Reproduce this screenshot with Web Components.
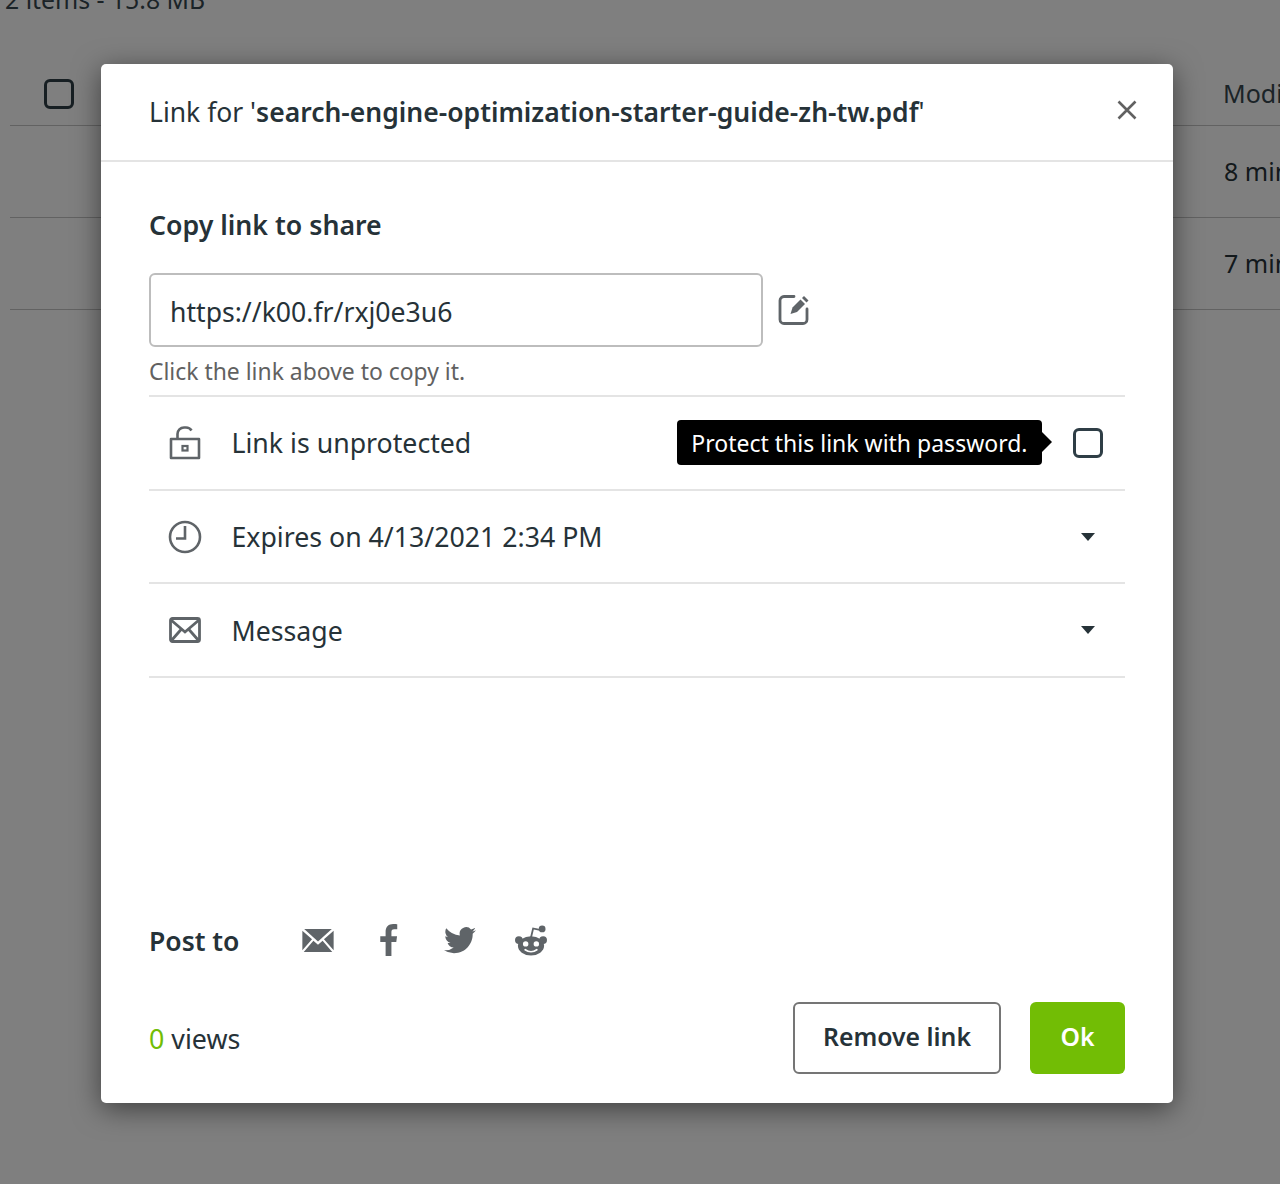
<!doctype html>
<html lang="en">
<head>
<meta charset="utf-8">
<title>Share link</title>
<style>
  html, body { margin: 0; height: 100%; }
  body { width: 1280px; height: 1184px; overflow: hidden; position: relative; font-family: "Noto Sans", "Open Sans", sans-serif; color: #263238; background: #fff; }
</style>
</head>
<body>
<file-list></file-list>
<share-dialog file="search-engine-optimization-starter-guide-zh-tw.pdf">
  <share-row label="Link is unprotected" icon="lock" mode="check"></share-row>
  <share-row label="Expires on 4/13/2021 2:34 PM" icon="clock"></share-row>
  <share-row label="Message" icon="mail"></share-row>
</share-dialog>

<script>
// 灰底後面的檔案列表
class FileList extends HTMLElement {
  constructor() {
    super();
    this.attachShadow({ mode: "open" });
    this.shadowRoot.innerHTML = `
      <style>
        :host { display: block; height: 1184px; overflow: hidden; font-size: 25px; color: #263238; padding-left: 10px; }
        .summary { height: 0; margin-left: -5px; line-height: 20px; transform: translateY(-11px); font-size: 24.800px; color: #37474f; white-space: nowrap; }
        .head, .item { display: flex; align-items: center; justify-content: space-between; height: 91px; border-bottom: 1px solid #c4c4c4; }
        .head { margin-top: 63px; height: 62px; }
        .box { width: 30px; height: 30px; box-sizing: border-box; border: 3px solid #2f3e46; border-radius: 6px; margin-left: 34px; }
        .col { width: 56px; padding-bottom: 2px; white-space: nowrap; overflow: hidden; }
        .head .col { width: 57px; color: #37474f; }
      </style>
      <div class="summary">2 items - 15.8 MB</div>
      <div class="head"><span class="box"></span><span class="col">Modified</span></div>
      <div class="item"><span></span><span class="col">8 min ago</span></div>
      <div class="item"><span></span><span class="col">7 min ago</span></div>
    `;
  }
}

const ICONS = {
  lock: `<svg width="32" height="34" viewBox="0 0 32 34" fill="none" stroke="#5f6468" stroke-width="2.600">
      <path d="M2 13h28v19H2z" stroke-linejoin="round"/>
      <path d="M8.500 12V8a6.500 6.500 0 0 1 6.500-6.500h2c2.400 0 4.400 1.200 5.500 3"/>
      <rect x="13.500" y="20" width="5" height="4.500" fill="none" stroke-width="2.200"/></svg>`,
  clock: `<svg width="34" height="34" viewBox="0 0 34 34" fill="none" stroke="#5f6468" stroke-width="2.600">
      <circle cx="17" cy="17" r="15"/><path d="M17 6v12.500H8"/></svg>`,
  mail: `<svg width="32" height="26" viewBox="0 0 32 26" fill="none" stroke="#5f6468" stroke-width="2.800">
      <rect x="1.500" y="1.500" width="29" height="23" rx="2"/><path d="M2 3l14 12L30 3M2 24l10.500-12M30 24L19.500 12"/></svg>`,
};

class ShareRow extends HTMLElement {
  constructor() {
    super();
    this.attachShadow({ mode: "open" });
  }

  connectedCallback() {
    const check = this.getAttribute("mode") === "check";
    this.shadowRoot.innerHTML = `
      <style>
        :host { display: flex; align-items: center; height: 91.700px; border-bottom: 2px solid #e4e4e4; font-size: 26.700px; color: #263238; }
        .icon { width: 82.500px; flex: none; display: flex; justify-content: center; padding-right: 10.500px; box-sizing: border-box; }
        .label { flex: 1; white-space: nowrap; }
        .tip { position: relative; background: #000; color: #fff; font-size: 23px; height: 45px; line-height: 46px; padding: 0 14.500px; border-radius: 4px; margin-right: 31px; }
        .tip::after { content: ""; position: absolute; left: 100%; top: 12px; border: 10px solid transparent; border-right: 0; border-left-color: #000; }
        .box { width: 30px; height: 30px; box-sizing: border-box; border: 3px solid #2f3e46; border-radius: 6px; margin-right: 22px; flex: none; }
        .caret { width: 0; height: 0; border: 7.500px solid transparent; border-top: 8px solid #263238; border-bottom: 0; margin-right: 30.500px; }
      </style>
      <span class="icon">${ICONS[this.getAttribute("icon")]}</span>
      <span class="label">${this.getAttribute("label")}</span>
      ${check
        ? `<span class="tip">Protect this link with password.</span><span class="box"></span>`
        : `<span class="caret"></span>`}
    `;
  }
}

class ShareDialog extends HTMLElement {
  constructor() {
    super();
    this.attachShadow({ mode: "open" });
  }

  connectedCallback() {
    const file = this.getAttribute("file");
    this.shadowRoot.innerHTML = `
      <style>
        :host { position: absolute; inset: 0; display: block; background: rgba(0,0,0,.5); }
        .modal { position: absolute; left: 101px; top: 64px; width: 1072px; height: 1039px; background: #fff; border-radius: 5px; box-shadow: 0 6px 28px rgba(0,0,0,.5); display: flex; flex-direction: column; box-sizing: border-box; }
        header { flex: none; height: 96px; padding: 0 36px 0 48px; border-bottom: 2px solid #e4e4e4; display: flex; align-items: center; justify-content: space-between; font-size: 26.500px; color: #263238; }
        header b { font-weight: 600; }
        .title { white-space: nowrap; }
        .close { display: block; margin-top: -5px; }
        main { flex: 1; padding: 0 48px 29px; display: flex; flex-direction: column; }
        h2 { margin: 44px 0 0; font-size: 26.700px; font-weight: 600; line-height: 37px; color: #263238; }
        .link { display: flex; align-items: center; margin-top: 30px; }
        .url { width: 614px; height: 74px; box-sizing: border-box; border: 2px solid #bdbdbd; border-radius: 6px; padding: 0 19px; font-size: 26.600px; line-height: 74px; color: #263238; }
        .edit { display: block; margin-left: 15px; }
        .hint { font-size: 22.900px; color: #616161; line-height: 32px; margin-top: 9px; padding-bottom: 7px; border-bottom: 2px solid #e4e4e4; }
        .post { display: flex; align-items: center; margin-top: auto; height: 40px; }
        .post strong { font-size: 26.500px; font-weight: 600; width: 133px; color: #263238; padding-top: 2px; }
        .post span { width: 71px; display: flex; justify-content: center; }
        .foot { display: flex; align-items: center; margin-top: 42px; height: 72px; }
        .views { flex: 1; font-size: 26.800px; color: #263238; padding-top: 1px; }
        .views i { font-style: normal; color: #72bd05; }
        button { font-family: inherit; font-size: 24.800px; font-weight: 600; height: 72px; border-radius: 6px; cursor: pointer; padding: 0 0 5px; }
        .rm { width: 208px; background: #fff; border: 2px solid #757575; color: #263238; }
        .ok { width: 95px; margin-left: 29px; background: #72bd05; border: 0; color: #fff; }
      </style>
      <div class="modal">
        <header>
          <span class="title">Link for '<b>${file}</b>'</span>
          <svg class="close" width="20" height="20" viewBox="0 0 20 20" stroke="#616161" stroke-width="2.600"><path d="M1.500 1.500l17 17M18.500 1.500l-17 17"/></svg>
        </header>
        <main>
          <h2>Copy link to share</h2>
          <div class="link">
            <div class="url">https://k00.fr/rxj0e3u6</div>
            <svg class="edit" width="32" height="32" viewBox="0 0 32 32" fill="none">
              <path d="M16 2.500H6a4 4 0 0 0-4 4v19a4 4 0 0 0 4 4h19a4 4 0 0 0 4-4V15" stroke="#5f6468" stroke-width="2.800" stroke-linecap="round"/>
              <path d="M14.500 13.500L22.500 5.500l4.500 4.500-8 8-6.500 2z" fill="#5f6468"/><path d="M24 4l2-2 4.500 4.500-2 2z" fill="#5f6468"/>
            </svg>
          </div>
          <div class="hint">Click the link above to copy it.</div>
          <slot></slot>
          <div class="post">
            <strong>Post to</strong>
            <span><svg width="32" height="23" viewBox="0 0 34 25"><path d="M2 0h30L17 13.500z" fill="#5f6468"/><path d="M0 2l10.500 9.200L0 23zM34 2L23.500 11.200 34 23zM1.500 25l10.500-12.300 5 4.300 5-4.300L32.500 25z" fill="#5f6468"/></svg></span>
            <span><svg width="18" height="32" viewBox="0 0 18 33"><path d="M5.500 33V18.500H0v-5.800h5.500V8C5.500 2.800 8.700 0 13.300 0c2.200 0 3.700.2 4.200.2v5.300h-3c-2.500 0-3 1.200-3 2.900v4.300h5.800l-.8 5.800h-5v14.500z" fill="#5f6468"/></svg></span>
            <span><svg width="32" height="27" viewBox="0 0 24 20"><path d="M24 2.400c-.9.400-1.800.7-2.800.8 1-.6 1.800-1.600 2.200-2.700-1 .6-2 1-3.100 1.200A4.900 4.900 0 0 0 11.900 6.200 14 14 0 0 1 1.700.9a4.900 4.900 0 0 0 1.500 6.600c-.8 0-1.600-.2-2.200-.6 0 2.400 1.700 4.400 3.900 4.900-.7.200-1.500.2-2.200.1.600 2 2.400 3.400 4.600 3.400A9.900 9.900 0 0 1 0 17.300 14 14 0 0 0 7.500 19.500c9.100 0 14.300-7.700 14-14.600 1-.7 1.800-1.500 2.500-2.500z" fill="#5f6468"/></svg></span>
            <span><svg width="34" height="31" viewBox="0 0 34 32"><g fill="#5f6468"><ellipse cx="17" cy="21.500" rx="13.500" ry="10"/><circle cx="4.500" cy="15.500" r="4"/><circle cx="29.500" cy="15.500" r="4"/><circle cx="28.500" cy="4" r="3.500"/><path d="M16 13l2.500-10.500 9 2-.4 1.800-7.200-1.600-2 8.500z"/></g><circle cx="11.500" cy="19.500" r="2.800" fill="#fff"/><circle cx="22.500" cy="19.500" r="2.800" fill="#fff"/><path d="M11 25.500c3.500 2.500 8.500 2.500 12 0" fill="none" stroke="#fff" stroke-width="1.800" stroke-linecap="round"/></svg></span>
          </div>
          <div class="foot">
            <div class="views"><i>0</i> views</div>
            <button class="rm" type="button">Remove link</button>
            <button class="ok" type="button">Ok</button>
          </div>
        </main>
      </div>
    `;
  }
}

customElements.define("file-list", FileList);
customElements.define("share-row", ShareRow);
customElements.define("share-dialog", ShareDialog);
</script>
</body>
</html>
